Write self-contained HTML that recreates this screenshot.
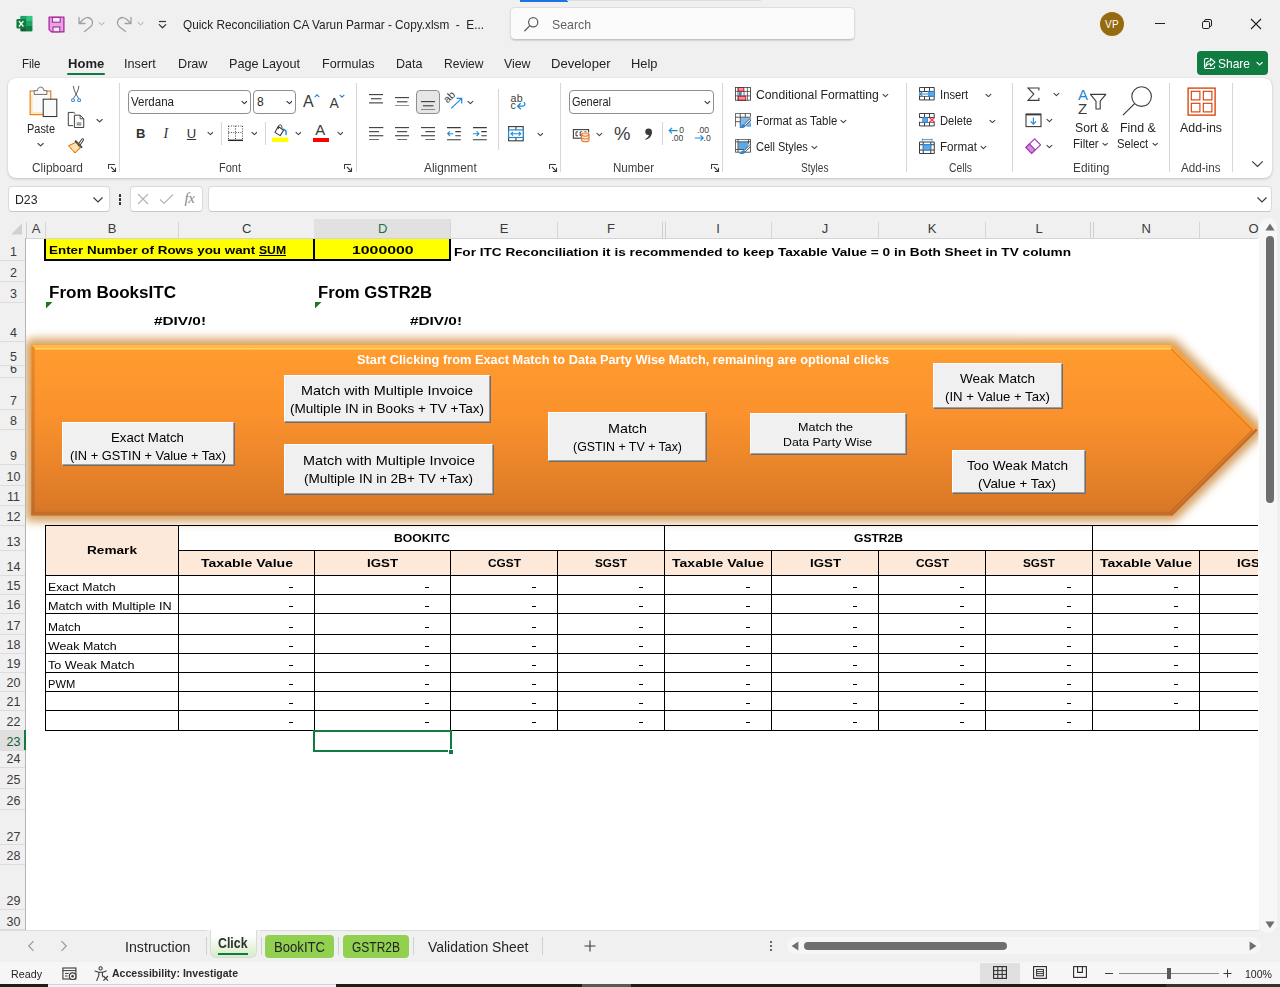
<!DOCTYPE html>
<html><head><meta charset="utf-8"><title>Excel</title>
<style>
html,body{margin:0;padding:0}
body{width:1280px;height:987px;position:relative;overflow:hidden;background:#f0f0f0;font-family:"Liberation Sans",sans-serif;color:#242424}
.b{position:absolute;display:block}
.t{position:absolute;white-space:nowrap;display:block}
</style></head><body>
<div class="b" style="left:520px;top:0px;width:47.5px;height:1.6px;background:#1a73e8"></div>
<div class="b" style="left:567px;top:0px;width:194px;height:1px;background:#dcdcdc"></div>
<svg class="b" style="left:15.6px;top:15.4px;" width="17.2" height="17.2" viewBox="0 0 19 19">
      <rect x="5" y="1" width="13" height="17" rx="1.5" fill="#21a366"/>
      <rect x="5" y="1" width="6.5" height="5.7" fill="#21a366"/>
      <rect x="11.5" y="1" width="6.5" height="5.7" rx="0" fill="#33c481"/>
      <rect x="5" y="6.7" width="6.5" height="5.6" fill="#107c41"/>
      <rect x="11.5" y="6.7" width="6.5" height="5.6" fill="#21a366"/>
      <rect x="5" y="12.3" width="6.5" height="5.7" fill="#185c37"/>
      <rect x="11.5" y="12.3" width="6.5" height="5.7" fill="#107c41"/>
      <rect x="0.5" y="4.5" width="10.5" height="10.5" rx="1.2" fill="#107c41"/>
      <path d="M3.3 6.8 L5.7 9.75 L3.3 12.7 M8.2 6.8 L5.7 9.75 L8.2 12.7" stroke="#fff" stroke-width="1.5" fill="none"/>
    </svg>
<svg class="b" style="left:47.6px;top:15.5px;" width="17" height="17" viewBox="0 0 17 17">
      <path d="M1.1 1.1 H15.9 V15.9 H3.4 L1.1 13.6 Z" fill="#e6a3e2" stroke="#a9279f" stroke-width="1.3" stroke-linejoin="round"/>
      <rect x="4.4" y="1.4" width="7.8" height="4.8" fill="#f4eef4" stroke="#a9279f" stroke-width="1.1"/>
      <rect x="5" y="11" width="6.8" height="4.8" fill="#f4eef4" stroke="#a9279f" stroke-width="1.1"/>
    </svg>
<svg class="b" style="left:77px;top:15px;" width="17" height="18" viewBox="0 0 17 18"><path d="M2 2.5 V8.5 H8 M2.3 8.2 L6.2 4.6 A5.2 5.2 0 1 1 13 12.2 L7.5 16.5" fill="none" stroke="#a0a0a0" stroke-width="1.3" stroke-linecap="round" stroke-linejoin="round"/></svg>
<svg class="b" style="left:97.9px;top:20.9px;" width="7.2" height="5.2" viewBox="0 0 7.2 5.2"><path d="M1 1.5 L3.6 3.9 L6.2 1.5" fill="none" stroke="#a0a0a0" stroke-width="1" stroke-linecap="round" stroke-linejoin="round"/></svg>
<svg class="b" style="left:116px;top:15px;" width="17" height="18" viewBox="0 0 17 18"><path d="M15 2.5 V8.5 H9 M14.7 8.2 L10.8 4.6 A5.2 5.2 0 1 0 4 12.2 L9.5 16.5" fill="none" stroke="#a0a0a0" stroke-width="1.3" stroke-linecap="round" stroke-linejoin="round"/></svg>
<svg class="b" style="left:136.9px;top:20.9px;" width="7.2" height="5.2" viewBox="0 0 7.2 5.2"><path d="M1 1.5 L3.6 3.9 L6.2 1.5" fill="none" stroke="#a0a0a0" stroke-width="1" stroke-linecap="round" stroke-linejoin="round"/></svg>
<svg class="b" style="left:158px;top:19.8px;" width="9" height="10" viewBox="0 0 9 10"><path d="M1 1.5 H8" stroke="#333" stroke-width="1.2"/><path d="M1.2 4.6 L4.5 7.8 L7.8 4.6" fill="none" stroke="#333" stroke-width="1.2" stroke-linejoin="round" stroke-linecap="round"/></svg>
<span class="t" style="transform-origin:0 50%;top:15.50px;line-height:18px;font-size:13px;left:183.00px;transform:scaleX(0.9070);white-space:pre">Quick Reconciliation CA Varun Parmar - Copy.xlsm  -  E...</span>
<div class="b" style="left:510px;top:7px;width:345px;height:33px;background:#fbfbfb;box-sizing:border-box;border:1px solid #dedede;border-bottom-color:#c4c4c4;border-radius:5px;box-shadow:0 1px 1.5px rgba(0,0,0,.12)"></div>
<svg class="b" style="left:523px;top:16px;" width="17" height="17" viewBox="0 0 17 17"><circle cx="10.2" cy="6.3" r="4.6" fill="none" stroke="#5c5c5c" stroke-width="1.2"/><path d="M6.9 9.6 L1.8 14.7" stroke="#5c5c5c" stroke-width="1.3" stroke-linecap="round"/></svg>
<span class="t" style="transform-origin:0 50%;top:15.50px;line-height:18px;font-size:13px;color:#616161;left:552.00px;transform:scaleX(0.9468)">Search</span>
<div class="b" style="left:1100px;top:12px;width:24px;height:24px;background:#966b10;border-radius:50%"></div>
<span class="t" style="top:17.50px;line-height:14px;font-size:10px;color:#fff;left:1112.00px;transform:translateX(-50%);letter-spacing:.3px">VP</span>
<div class="b" style="left:1155px;top:23px;width:10px;height:1px;background:#1f1f1f"></div>
<svg class="b" style="left:1201px;top:18px;" width="12" height="12" viewBox="0 0 12 12"><rect x="1.5" y="3.5" width="7" height="7" rx="1.3" fill="none" stroke="#1f1f1f" stroke-width="1"/><path d="M3.5 3.3 V3 a1.5 1.5 0 0 1 1.5 -1.5 H9 a1.5 1.5 0 0 1 1.5 1.5 V7 a1.5 1.5 0 0 1 -1.5 1.5 H8.7" fill="none" stroke="#1f1f1f" stroke-width="1"/></svg>
<svg class="b" style="left:1250px;top:18px;" width="12" height="12" viewBox="0 0 12 12"><path d="M1 1 L11 11 M11 1 L1 11" stroke="#1f1f1f" stroke-width="1.1"/></svg>
<span class="t" style="transform-origin:0 50%;top:54.50px;line-height:18px;font-size:13px;left:22.00px;transform:scaleX(0.8831)">File</span>
<span class="t" style="transform-origin:0 50%;top:54.50px;line-height:18px;font-size:13px;left:124.00px;transform:scaleX(0.9765)">Insert</span>
<span class="t" style="transform-origin:0 50%;top:54.50px;line-height:18px;font-size:13px;left:177.50px;transform:scaleX(0.9724)">Draw</span>
<span class="t" style="transform-origin:0 50%;top:54.50px;line-height:18px;font-size:13px;left:229.00px;transform:scaleX(0.9725)">Page Layout</span>
<span class="t" style="transform-origin:0 50%;top:54.50px;line-height:18px;font-size:13px;left:322.00px;transform:scaleX(0.9690)">Formulas</span>
<span class="t" style="transform-origin:0 50%;top:54.50px;line-height:18px;font-size:13px;left:396.00px;transform:scaleX(0.9650)">Data</span>
<span class="t" style="transform-origin:0 50%;top:54.50px;line-height:18px;font-size:13px;left:444.00px;transform:scaleX(0.9267)">Review</span>
<span class="t" style="transform-origin:0 50%;top:54.50px;line-height:18px;font-size:13px;left:504.00px;transform:scaleX(0.9483)">View</span>
<span class="t" style="transform-origin:0 50%;top:54.50px;line-height:18px;font-size:13px;left:551.00px;transform:scaleX(1.0041)">Developer</span>
<span class="t" style="transform-origin:0 50%;top:54.50px;line-height:18px;font-size:13px;left:631.00px;transform:scaleX(0.9911)">Help</span>
<span class="t" style="transform-origin:0 50%;top:54.50px;line-height:18px;font-size:13px;font-weight:bold;color:#1f1f1f;left:67.50px;transform:scaleX(1.0036)">Home</span>
<div class="b" style="left:67px;top:73px;width:37.5px;height:2.2px;background:#107c41;border-radius:1px"></div>
<div class="b" style="left:1197px;top:51px;width:71px;height:24px;background:#107c41;border-radius:4px"></div>
<svg class="b" style="left:1203px;top:56px;" width="14" height="14" viewBox="0 0 14 14"><path d="M7.5 2.5 L12 6.2 L7.5 10 V7.8 C5 7.8 3.6 8.8 2.8 10.5 C3 7 4.8 4.9 7.5 4.7 Z" fill="none" stroke="#fff" stroke-width="1.1" stroke-linejoin="round"/><path d="M5 2.5 H3 a1.5 1.5 0 0 0 -1.5 1.5 V11 a1.5 1.5 0 0 0 1.5 1.5 H10 a1.5 1.5 0 0 0 1.5 -1.5 V10.5" fill="none" stroke="#fff" stroke-width="1.1" stroke-linecap="round"/></svg>
<span class="t" style="transform-origin:0 50%;top:54.50px;line-height:18px;font-size:13px;color:#fff;left:1218.00px;transform:scaleX(0.9224)">Share</span>
<svg class="b" style="left:1256.4px;top:60.9px;" width="7.2" height="5.2" viewBox="0 0 7.2 5.2"><path d="M1 1.5 L3.6 3.9 L6.2 1.5" fill="none" stroke="#fff" stroke-width="1.1" stroke-linecap="round" stroke-linejoin="round"/></svg>
<div class="b" style="left:8px;top:78px;width:1264px;height:100.2px;background:#fff;border-radius:8px;box-shadow:0 1px 3px rgba(0,0,0,.18),0 0 1px rgba(0,0,0,.12)"></div>
<div class="b" style="left:119px;top:83px;width:1px;height:89px;background:#d6d6d6"></div>
<div class="b" style="left:356px;top:83px;width:1px;height:89px;background:#d6d6d6"></div>
<div class="b" style="left:559.5px;top:83px;width:1px;height:89px;background:#d6d6d6"></div>
<div class="b" style="left:721.5px;top:83px;width:1px;height:89px;background:#d6d6d6"></div>
<div class="b" style="left:905.9px;top:83px;width:1px;height:89px;background:#d6d6d6"></div>
<div class="b" style="left:1012px;top:83px;width:1px;height:89px;background:#d6d6d6"></div>
<div class="b" style="left:1169px;top:83px;width:1px;height:89px;background:#d6d6d6"></div>
<div class="b" style="left:1231.8px;top:83px;width:1px;height:89px;background:#d6d6d6"></div>
<svg class="b" style="left:20px;top:82px;" width="110" height="78" viewBox="0 0 1280 908"><rect x="118" y="105" width="240" height="275" fill="#fafafa" stroke="#e8760a" stroke-width="13"/><path d="M138 150 V360 H300" fill="none" stroke="#fde29a" stroke-width="14"/><path d="M165 145 V100 H203 C203 76 216 60 240 60 C264 60 277 76 277 100 H313 V145 Z" fill="#f7f7f7" stroke="#6a6a6a" stroke-width="11" stroke-linejoin="round"/><rect x="270" y="200" width="158" height="202" fill="#fafafa" stroke="#333" stroke-width="12"/><path d="M621 50 C630 110 655 150 684 192 M685 50 C676 110 651 150 622 192" fill="none" stroke="#444" stroke-width="10" stroke-linecap="round"/><circle cx="617" cy="211" r="17" fill="none" stroke="#2b88d8" stroke-width="12"/><circle cx="688" cy="211" r="17" fill="none" stroke="#2b88d8" stroke-width="12"/><path d="M618 508 H562 V354 H625 L642 368" fill="none" stroke="#333" stroke-width="11" stroke-linejoin="round"/><path d="M633 386 H700 L742 428 V530 H633 Z" fill="#fafafa" stroke="#333" stroke-width="11" stroke-linejoin="round"/><path d="M700 388 V428 H740" fill="none" stroke="#333" stroke-width="10"/><path d="M660 478 H714 M660 499 H714" stroke="#333" stroke-width="9"/><path d="M566 742 L652 702 L702 768 L640 824 Z" fill="#fde3ae" stroke="#e8760a" stroke-width="12" stroke-linejoin="round"/><path d="M610 790 L660 760" stroke="#fff" stroke-width="9"/><path d="M728 672 L690 728" stroke="#333" stroke-width="34" stroke-linecap="round"/><path d="M728 672 L690 728" stroke="#fafafa" stroke-width="13" stroke-linecap="round"/><path d="M648 690 L716 758" stroke="#333" stroke-width="22" stroke-linecap="round"/><path d="M652 694 L712 754" stroke="#e8e8e8" stroke-width="5"/></svg>
<span class="t" style="transform-origin:0 50%;top:120.50px;line-height:17px;font-size:12px;left:27.00px;transform:scaleX(0.9125)">Paste</span>
<svg class="b" style="left:36.8px;top:141.9px;" width="7.2" height="5.2" viewBox="0 0 7.2 5.2"><path d="M1 1.5 L3.6 3.9 L6.2 1.5" fill="none" stroke="#424242" stroke-width="1.1" stroke-linecap="round" stroke-linejoin="round"/></svg>
<svg class="b" style="left:95.9px;top:118px;" width="7.2" height="5.2" viewBox="0 0 7.2 5.2"><path d="M1 1.5 L3.6 3.9 L6.2 1.5" fill="none" stroke="#424242" stroke-width="1.1" stroke-linecap="round" stroke-linejoin="round"/></svg>
<span class="t" style="transform-origin:0 50%;top:160.00px;line-height:17px;font-size:12px;color:#3d3d3d;left:32.00px;transform:scaleX(0.9929)">Clipboard</span>
<svg class="b" style="left:107.6px;top:164px;" width="9" height="9" viewBox="0 0 9 9"><path d="M0.5 5 V0.5 H7" stroke="#3b3b3b" stroke-width="1.1" fill="none"/><path d="M3 3 L7.3 7.3 M7.5 3.8 V7.5 H3.8" stroke="#3b3b3b" stroke-width="1.1" fill="none"/></svg>
<div class="b" style="left:128px;top:90.3px;width:122.6px;height:23.6px;background:#fff;border:1px solid #8f8f8f;border-radius:4px;box-sizing:border-box"></div>
<div class="b" style="left:253px;top:90.3px;width:42.6px;height:23.6px;background:#fff;border:1px solid #8f8f8f;border-radius:4px;box-sizing:border-box"></div>
<span class="t" style="transform-origin:0 50%;top:93.50px;line-height:17px;font-size:12px;left:131.00px;transform:scaleX(0.9618)">Verdana</span>
<svg class="b" style="left:240.6px;top:100.1px;" width="6.8" height="4.8" viewBox="0 0 6.8 4.8"><path d="M1 1.4 L3.4 3.6 L5.8 1.4" fill="none" stroke="#333" stroke-width="1.1" stroke-linecap="round" stroke-linejoin="round"/></svg>
<span class="t" style="top:93.50px;line-height:17px;font-size:12px;left:257.00px">8</span>
<svg class="b" style="left:285.6px;top:100.1px;" width="6.8" height="4.8" viewBox="0 0 6.8 4.8"><path d="M1 1.4 L3.4 3.6 L5.8 1.4" fill="none" stroke="#333" stroke-width="1.1" stroke-linecap="round" stroke-linejoin="round"/></svg>
<span class="t" style="top:90.50px;line-height:22px;font-size:16px;color:#3b3b3b;left:303.00px">A</span>
<svg class="b" style="left:313.5px;top:94px;" width="6" height="4" viewBox="0 0 6 4"><path d="M0.7 3.2 L3 0.9 L5.3 3.2" fill="none" stroke="#1e8ad6" stroke-width="1.1"/></svg>
<span class="t" style="top:92.50px;line-height:20px;font-size:14px;color:#3b3b3b;left:329.60px">A</span>
<svg class="b" style="left:339px;top:94px;" width="6" height="4" viewBox="0 0 6 4"><path d="M0.7 0.8 L3 3.1 L5.3 0.8" fill="none" stroke="#1e8ad6" stroke-width="1.1"/></svg>
<span class="t" style="top:125.00px;line-height:18px;font-size:13px;font-weight:bold;color:#333;left:136.00px">B</span>
<span class="t" style="top:125.00px;line-height:18px;font-size:13px;font-style:italic;color:#333;left:163.50px;font-family:'Liberation Serif',serif;font-size:14px">I</span>
<span class="t" style="top:124.50px;line-height:18px;font-size:13px;color:#333;text-decoration:underline;left:186.80px">U</span>
<svg class="b" style="left:206.6px;top:131.1px;" width="6.8" height="4.8" viewBox="0 0 6.8 4.8"><path d="M1 1.4 L3.4 3.6 L5.8 1.4" fill="none" stroke="#424242" stroke-width="1.1" stroke-linecap="round" stroke-linejoin="round"/></svg>
<div class="b" style="left:221.2px;top:122px;width:1px;height:23px;background:#d6d6d6"></div>
<svg class="b" style="left:227px;top:125px;" width="17" height="17" viewBox="0 0 17 17">
      <path d="M1.5 1 H15.5 M1.5 1 V14 M15.5 1 V14 M8.5 1 V14 M1.5 7.5 H15.5" stroke="#4a4a4a" stroke-width="1" stroke-dasharray="1 1.4" fill="none"/>
      <path d="M1 15.3 H16" stroke="#2b2b2b" stroke-width="1.5"/></svg>
<svg class="b" style="left:250.6px;top:131.1px;" width="6.8" height="4.8" viewBox="0 0 6.8 4.8"><path d="M1 1.4 L3.4 3.6 L5.8 1.4" fill="none" stroke="#424242" stroke-width="1.1" stroke-linecap="round" stroke-linejoin="round"/></svg>
<div class="b" style="left:265px;top:122px;width:1px;height:23px;background:#d6d6d6"></div>
<svg class="b" style="left:272px;top:123px;" width="18" height="20" viewBox="0 0 18 20">
      <path d="M6.2 3.4 L11.6 7.2 L8.2 12.6 L3 9.4 Z" fill="#fff" stroke="#3b3b3b" stroke-width="1.1" stroke-linejoin="round"/>
      <path d="M6.4 6 C6 3.4 6.8 1.6 8.4 1.8 C9.8 2 10.2 3.8 9.8 5.8" fill="none" stroke="#3b3b3b" stroke-width="1"/>
      <path d="M11.4 6.2 C13.6 6.6 14.6 8.6 14 11.4" fill="none" stroke="#1e8ad6" stroke-width="1.5" stroke-linecap="round"/>
      <rect x="0" y="14.6" width="16.3" height="4.4" fill="#ffff00"/></svg>
<svg class="b" style="left:294.6px;top:131.1px;" width="6.8" height="4.8" viewBox="0 0 6.8 4.8"><path d="M1 1.4 L3.4 3.6 L5.8 1.4" fill="none" stroke="#424242" stroke-width="1.1" stroke-linecap="round" stroke-linejoin="round"/></svg>
<span class="t" style="top:119.00px;line-height:21px;font-size:15px;color:#3b3b3b;left:315.30px">A</span>
<div class="b" style="left:313px;top:137.6px;width:16.3px;height:4.4px;background:#ff0000"></div>
<svg class="b" style="left:336.6px;top:131.1px;" width="6.8" height="4.8" viewBox="0 0 6.8 4.8"><path d="M1 1.4 L3.4 3.6 L5.8 1.4" fill="none" stroke="#424242" stroke-width="1.1" stroke-linecap="round" stroke-linejoin="round"/></svg>
<span class="t" style="transform-origin:0 50%;top:160.00px;line-height:17px;font-size:12px;color:#3d3d3d;left:219.00px;transform:scaleX(0.9162)">Font</span>
<svg class="b" style="left:344px;top:164px;" width="9" height="9" viewBox="0 0 9 9"><path d="M0.5 5 V0.5 H7" stroke="#3b3b3b" stroke-width="1.1" fill="none"/><path d="M3 3 L7.3 7.3 M7.5 3.8 V7.5 H3.8" stroke="#3b3b3b" stroke-width="1.1" fill="none"/></svg>
<svg class="b" style="left:368.7px;top:93.9px;" width="14.3" height="9.7" viewBox="0 0 14.3 9.7"><path d="M0 0.6 H14.3" stroke="#3b3b3b" stroke-width="1.1"/><path d="M1.85 4.75 H12.45" stroke="#3b3b3b" stroke-width="1.1"/><path d="M0 8.9 H14.3" stroke="#3b3b3b" stroke-width="1.1"/></svg>
<svg class="b" style="left:394.7px;top:96.5px;" width="14.3" height="9.8" viewBox="0 0 14.3 9.8"><path d="M0 0.6 H14.3" stroke="#3b3b3b" stroke-width="1.1"/><path d="M1.85 4.8 H12.45" stroke="#3b3b3b" stroke-width="1.1"/><path d="M0 9 H14.3" stroke="#3b3b3b" stroke-width="1.1"/></svg>
<div class="b" style="left:416.2px;top:90.2px;width:23.6px;height:23.7px;background:#e6e6e6;border:1px solid #8f8f8f;border-radius:4px;box-sizing:border-box"></div>
<svg class="b" style="left:421px;top:100.6px;" width="14.3" height="9.8" viewBox="0 0 14.3 9.8"><path d="M0 0.6 H14.3" stroke="#3b3b3b" stroke-width="1.1"/><path d="M1.85 4.8 H12.45" stroke="#3b3b3b" stroke-width="1.1"/><path d="M0 9 H14.3" stroke="#3b3b3b" stroke-width="1.1"/></svg>
<svg class="b" style="left:444px;top:91px;" width="20" height="20" viewBox="0 0 20 20">
      <text x="0" y="0" font-size="10.5" font-family="Liberation Sans" fill="#3b3b3b" transform="translate(3.6 12.6) rotate(-45)">ab</text>
      <path d="M7.2 17.4 L17.4 7.6 M12.6 7.3 H17.7 V12.4" fill="none" stroke="#1e8ad6" stroke-width="1.2"/></svg>
<svg class="b" style="left:466.8px;top:99.9px;" width="6.8" height="4.8" viewBox="0 0 6.8 4.8"><path d="M1 1.4 L3.4 3.6 L5.8 1.4" fill="none" stroke="#424242" stroke-width="1.1" stroke-linecap="round" stroke-linejoin="round"/></svg>
<div class="b" style="left:497.7px;top:89px;width:1px;height:61px;background:#d6d6d6"></div>
<svg class="b" style="left:509px;top:93px;" width="19" height="18" viewBox="0 0 19 18">
      <text x="1.6" y="8.6" font-size="10.6" font-family="Liberation Sans" fill="#3b3b3b" letter-spacing=".3">ab</text>
      <text x="1.6" y="15.6" font-size="10.6" font-family="Liberation Sans" fill="#3b3b3b">c</text>
      <path d="M15.2 9.6 C16.8 11.2 15.6 13.2 13.4 13.2 H8.8 M11.4 10.6 L8.6 13.2 L11.4 15.8" fill="none" stroke="#1e8ad6" stroke-width="1.3" stroke-linecap="round"/></svg>
<svg class="b" style="left:368.7px;top:126.7px;" width="15" height="13.61" viewBox="0 0 15 13.61"><path d="M0 0.6 H14.3" stroke="#3b3b3b" stroke-width="1.1"/><path d="M0 4.67 H10" stroke="#3b3b3b" stroke-width="1.1"/><path d="M0 8.74 H14.3" stroke="#3b3b3b" stroke-width="1.1"/><path d="M0 12.81 H10" stroke="#3b3b3b" stroke-width="1.1"/></svg>
<svg class="b" style="left:394.7px;top:126.7px;" width="14.3" height="13.61" viewBox="0 0 14.3 13.61"><path d="M0 0.6 H14.3" stroke="#3b3b3b" stroke-width="1.1"/><path d="M2.15 4.67 H12.15" stroke="#3b3b3b" stroke-width="1.1"/><path d="M0 8.74 H14.3" stroke="#3b3b3b" stroke-width="1.1"/><path d="M2.15 12.81 H12.15" stroke="#3b3b3b" stroke-width="1.1"/></svg>
<svg class="b" style="left:420.8px;top:126.7px;" width="14.3" height="13.61" viewBox="0 0 14.3 13.61"><path d="M0 0.6 H14.3" stroke="#3b3b3b" stroke-width="1.1"/><path d="M4.3 4.67 H14.3" stroke="#3b3b3b" stroke-width="1.1"/><path d="M0 8.74 H14.3" stroke="#3b3b3b" stroke-width="1.1"/><path d="M4.3 12.81 H14.3" stroke="#3b3b3b" stroke-width="1.1"/></svg>
<svg class="b" style="left:447px;top:126.7px;" width="15" height="14" viewBox="0 0 15 14"><path d="M0 0.6 H13.8 M8.3 4.67 H13.8 M8.3 8.74 H13.8 M0 12.8 H13.8" stroke="#3b3b3b" stroke-width="1.1"/><path d="M6.3 6.7 H0.8 M3 4.4 L0.7 6.7 L3 9" fill="none" stroke="#1e8ad6" stroke-width="1.1"/></svg>
<svg class="b" style="left:473px;top:126.7px;" width="15" height="14" viewBox="0 0 15 14"><path d="M0 0.6 H13.8 M8.3 4.67 H13.8 M8.3 8.74 H13.8 M0 12.8 H13.8" stroke="#3b3b3b" stroke-width="1.1"/><path d="M0 6.7 H5.8 M3.6 4.4 L5.9 6.7 L3.6 9" fill="none" stroke="#1e8ad6" stroke-width="1.1"/></svg>
<svg class="b" style="left:508.4px;top:125.6px;" width="17" height="16" viewBox="0 0 17 16">
      <rect x="0.6" y="0.6" width="14.6" height="14.2" fill="#fff" stroke="#3b3b3b" stroke-width="1.1"/>
      <path d="M7.9 0.6 V4 M7.9 11.4 V14.8" stroke="#3b3b3b" stroke-width="1.1"/>
      <rect x="0.6" y="3.9" width="14.6" height="7.6" fill="#fff" stroke="#1e8ad6" stroke-width="1.2"/>
      <path d="M3 7.7 H12.8 M5 5.8 L3 7.7 L5 9.6 M10.8 5.8 L12.8 7.7 L10.8 9.6" fill="none" stroke="#1e8ad6" stroke-width="1.1"/></svg>
<svg class="b" style="left:536.6px;top:131.8px;" width="6.8" height="4.8" viewBox="0 0 6.8 4.8"><path d="M1 1.4 L3.4 3.6 L5.8 1.4" fill="none" stroke="#424242" stroke-width="1.1" stroke-linecap="round" stroke-linejoin="round"/></svg>
<span class="t" style="transform-origin:0 50%;top:160.00px;line-height:17px;font-size:12px;color:#3d3d3d;left:424.00px;transform:scaleX(0.9876)">Alignment</span>
<svg class="b" style="left:548.6px;top:164px;" width="9" height="9" viewBox="0 0 9 9"><path d="M0.5 5 V0.5 H7" stroke="#3b3b3b" stroke-width="1.1" fill="none"/><path d="M3 3 L7.3 7.3 M7.5 3.8 V7.5 H3.8" stroke="#3b3b3b" stroke-width="1.1" fill="none"/></svg>
<div class="b" style="left:569px;top:90.4px;width:145.4px;height:23.4px;background:#fff;border:1px solid #8f8f8f;border-radius:4px;box-sizing:border-box"></div>
<span class="t" style="transform-origin:0 50%;top:93.50px;line-height:17px;font-size:12px;left:572.00px;transform:scaleX(0.9135)">General</span>
<svg class="b" style="left:704.1px;top:100.1px;" width="6.8" height="4.8" viewBox="0 0 6.8 4.8"><path d="M1 1.4 L3.4 3.6 L5.8 1.4" fill="none" stroke="#333" stroke-width="1.1" stroke-linecap="round" stroke-linejoin="round"/></svg>
<svg class="b" style="left:572px;top:128px;" width="19" height="15" viewBox="0 0 19 15">
      <rect x="1.4" y="1.6" width="15.2" height="8.6" fill="#fff" stroke="#3b3b3b" stroke-width="1.1"/>
      <path d="M6 3.9 H4 V7.8 H6 M10.4 3.9 H8.2 V7.8 H10.4 M12.4 3.9 H14.4" stroke="#3b3b3b" stroke-width="1" fill="none"/>
      <rect x="9" y="4.4" width="9" height="10" fill="#fff"/>
      <path d="M9.6 6.6 V12.2 a3.7 1.6 0 0 0 7.4 0 V6.6" fill="#fde9d4" stroke="#e8742a" stroke-width="1.1"/>
      <ellipse cx="13.3" cy="6.6" rx="3.7" ry="1.6" fill="#fde9d4" stroke="#e8742a" stroke-width="1.1"/>
      <path d="M9.6 9.4 a3.7 1.6 0 0 0 7.4 0" fill="none" stroke="#e8742a" stroke-width="1"/></svg>
<svg class="b" style="left:596px;top:131.8px;" width="6.8" height="4.8" viewBox="0 0 6.8 4.8"><path d="M1 1.4 L3.4 3.6 L5.8 1.4" fill="none" stroke="#424242" stroke-width="1.1" stroke-linecap="round" stroke-linejoin="round"/></svg>
<span class="t" style="top:121.20px;line-height:26px;font-size:18.5px;color:#3b3b3b;left:614.00px">%</span>
<svg class="b" style="left:644px;top:128px;" width="9" height="13" viewBox="0 0 9 13"><circle cx="4.6" cy="3.8" r="3.3" fill="#3b3b3b"/><path d="M7.9 3.6 C8.2 7.6 6 10.6 1.6 11.8 L1.2 11 C3.8 9.8 5.2 8 5.2 5.6 Z" fill="#3b3b3b"/></svg>
<div class="b" style="left:662px;top:122px;width:1px;height:23px;background:#d6d6d6"></div>
<svg class="b" style="left:668px;top:125px;" width="18" height="17" viewBox="0 0 18 17">
      <path d="M1.3 5.6 H9.6 M4 2.9 L1.3 5.6 L4 8.3" fill="none" stroke="#1e8ad6" stroke-width="1.2"/>
      <text x="11.3" y="7.6" font-size="8.6" font-family="Liberation Sans" fill="#3b3b3b">0</text>
      <text x="3.4" y="15.9" font-size="8.6" font-family="Liberation Sans" fill="#3b3b3b">.00</text></svg>
<svg class="b" style="left:694px;top:125px;" width="18" height="17" viewBox="0 0 18 17">
      <text x="3.2" y="7.6" font-size="8.6" font-family="Liberation Sans" fill="#3b3b3b">.00</text>
      <path d="M0.8 13 H9.2 M6.5 10.3 L9.2 13 L6.5 15.7" fill="none" stroke="#1e8ad6" stroke-width="1.2"/>
      <text x="9.6" y="15.9" font-size="8.6" font-family="Liberation Sans" fill="#3b3b3b">.0</text></svg>
<span class="t" style="transform-origin:0 50%;top:160.00px;line-height:17px;font-size:12px;color:#3d3d3d;left:613.00px;transform:scaleX(0.9606)">Number</span>
<svg class="b" style="left:710.6px;top:164px;" width="9" height="9" viewBox="0 0 9 9"><path d="M0.5 5 V0.5 H7" stroke="#3b3b3b" stroke-width="1.1" fill="none"/><path d="M3 3 L7.3 7.3 M7.5 3.8 V7.5 H3.8" stroke="#3b3b3b" stroke-width="1.1" fill="none"/></svg>
<svg class="b" style="left:735.1px;top:87.2px;" width="16" height="13.7" viewBox="0 0 170 146"><rect x="0" y="0" width="169" height="145" fill="#fff"/><rect x="34" y="4" width="60" height="41" fill="#f4919a" stroke="#e3202d" stroke-width="8"/><rect x="34" y="98" width="80" height="43" fill="#f4919a" stroke="#e3202d" stroke-width="8"/><rect x="43" y="50" width="28" height="42" fill="#2b88d8"/><path d="M32 0 V145 M132 0 V145 M0 47 H169 M0 95 H169 M96 47 V95" stroke="#3b3b3b" stroke-width="8" fill="none"/><rect x="34" y="4" width="60" height="41" fill="none" stroke="#e3202d" stroke-width="7"/><rect x="34" y="98" width="80" height="43" fill="none" stroke="#e3202d" stroke-width="7"/><rect x="4" y="4" width="161" height="137" fill="none" stroke="#3b3b3b" stroke-width="9"/></svg>
<span class="t" style="transform-origin:0 50%;top:86.50px;line-height:17px;font-size:12px;left:755.70px;transform:scaleX(1.0180)">Conditional Formatting</span>
<svg class="b" style="left:882.2px;top:92.9px;" width="6.8" height="4.8" viewBox="0 0 6.8 4.8"><path d="M1 1.4 L3.4 3.6 L5.8 1.4" fill="none" stroke="#424242" stroke-width="1.1" stroke-linecap="round" stroke-linejoin="round"/></svg>
<svg class="b" style="left:735.1px;top:113.2px;" width="16.4" height="14.8" viewBox="0 0 175 158"><rect x="4" y="4" width="161" height="137" fill="#fff"/><rect x="58" y="50" width="110" height="92" fill="#7dbdf0"/><path d="M4 145 V4 H165 V40 M4 45 H165 M56 4 V145 M110 4 V45 M4 93 H56" stroke="#3b3b3b" stroke-width="9" fill="none"/><path d="M128 141 H168 V108" stroke="#2b88d8" stroke-width="8" fill="none"/><path d="M160 60 L97 123 L110 136 L172 73 Z" fill="#fff" stroke="#3b3b3b" stroke-width="9" stroke-linejoin="round"/><path d="M95 120 L112 138 C104 158 82 168 42 158 C62 150 62 126 95 120 Z" fill="#2b88d8"/></svg>
<span class="t" style="transform-origin:0 50%;top:112.50px;line-height:17px;font-size:12px;left:755.70px;transform:scaleX(0.9473)">Format as Table</span>
<svg class="b" style="left:840.2px;top:118.9px;" width="6.8" height="4.8" viewBox="0 0 6.8 4.8"><path d="M1 1.4 L3.4 3.6 L5.8 1.4" fill="none" stroke="#424242" stroke-width="1.1" stroke-linecap="round" stroke-linejoin="round"/></svg>
<svg class="b" style="left:735.1px;top:139.2px;" width="16.4" height="14.8" viewBox="0 0 175 158"><rect x="4" y="4" width="161" height="137" fill="#fff"/><rect x="34" y="32" width="108" height="80" fill="#5aa9ea"/><path d="M4 4 H165 V141 H4 Z M32 4 V141 M4 30 H165 M4 112 H100 M144 4 V50" stroke="#3b3b3b" stroke-width="9" fill="none"/><path d="M160 60 L97 123 L110 136 L172 73 Z" fill="#fff" stroke="#3b3b3b" stroke-width="9" stroke-linejoin="round"/><path d="M95 120 L112 138 C104 158 82 168 42 158 C62 150 62 126 95 120 Z" fill="#2b88d8"/></svg>
<span class="t" style="transform-origin:0 50%;top:138.50px;line-height:17px;font-size:12px;left:755.70px;transform:scaleX(0.9138)">Cell Styles</span>
<svg class="b" style="left:811.1px;top:144.9px;" width="6.8" height="4.8" viewBox="0 0 6.8 4.8"><path d="M1 1.4 L3.4 3.6 L5.8 1.4" fill="none" stroke="#424242" stroke-width="1.1" stroke-linecap="round" stroke-linejoin="round"/></svg>
<span class="t" style="transform-origin:0 50%;top:160.00px;line-height:17px;font-size:12px;color:#3d3d3d;left:800.50px;transform:scaleX(0.8415)">Styles</span>
<svg class="b" style="left:919px;top:87.25px;" width="16" height="13.7" viewBox="0 0 128 110"><rect x="4" y="4" width="118" height="100" fill="#fff"/><path d="M4 4 H122 V104 H4 Z M4 36 H122 M4 74 H122 M44 4 V36 M84 4 V36 M44 74 V104 M84 74 V104" stroke="#3b3b3b" stroke-width="8" fill="none"/><rect x="4" y="40" width="70" height="30" fill="#fff"/><rect x="78" y="38" width="46" height="36" fill="#5aa9ea" stroke="#2b88d8" stroke-width="7"/><path d="M6 56 H76 M28 36 L6 56 L28 76" stroke="#2b88d8" stroke-width="9" fill="none"/></svg>
<span class="t" style="transform-origin:0 50%;top:86.50px;line-height:17px;font-size:12px;left:939.60px;transform:scaleX(0.9380)">Insert</span>
<svg class="b" style="left:985.1px;top:92.6px;" width="6.8" height="4.8" viewBox="0 0 6.8 4.8"><path d="M1 1.4 L3.4 3.6 L5.8 1.4" fill="none" stroke="#424242" stroke-width="1.1" stroke-linecap="round" stroke-linejoin="round"/></svg>
<svg class="b" style="left:919px;top:113.25px;" width="16" height="13.7" viewBox="0 0 128 110"><rect x="4" y="4" width="118" height="100" fill="#fff"/><path d="M4 4 H122 V104 H4 Z M4 36 H122 M4 74 H122 M44 4 V36 M84 4 V36 M44 74 V104 M84 74 V104" stroke="#3b3b3b" stroke-width="8" fill="none"/><rect x="0" y="40" width="128" height="30" fill="#fff"/><rect x="30" y="38" width="38" height="36" fill="#5aa9ea" stroke="#2b88d8" stroke-width="7"/><path d="M84 36 L124 76 M124 36 L84 76" stroke="#f0323e" stroke-width="9" fill="none"/></svg>
<span class="t" style="transform-origin:0 50%;top:112.50px;line-height:17px;font-size:12px;left:939.60px;transform:scaleX(0.9311)">Delete</span>
<svg class="b" style="left:989.1px;top:118.6px;" width="6.8" height="4.8" viewBox="0 0 6.8 4.8"><path d="M1 1.4 L3.4 3.6 L5.8 1.4" fill="none" stroke="#424242" stroke-width="1.1" stroke-linecap="round" stroke-linejoin="round"/></svg>
<svg class="b" style="left:919px;top:138px;" width="16" height="16" viewBox="0 0 128 128"><path d="M26 4 V22 M104 4 V22 M26 13 H104" stroke="#2b88d8" stroke-width="7" fill="none"/><rect x="4" y="32" width="118" height="92" fill="#fff"/><path d="M4 32 H122 V124 H4 Z M4 54 H122 M4 96 H122 M34 32 V124 M94 32 V124" stroke="#3b3b3b" stroke-width="8" fill="none"/><rect x="34" y="54" width="60" height="42" fill="#5aa9ea" stroke="#2b88d8" stroke-width="7"/></svg>
<span class="t" style="transform-origin:0 50%;top:138.50px;line-height:17px;font-size:12px;left:939.60px;transform:scaleX(0.9709)">Format</span>
<svg class="b" style="left:980.1px;top:144.9px;" width="6.8" height="4.8" viewBox="0 0 6.8 4.8"><path d="M1 1.4 L3.4 3.6 L5.8 1.4" fill="none" stroke="#424242" stroke-width="1.1" stroke-linecap="round" stroke-linejoin="round"/></svg>
<span class="t" style="transform-origin:0 50%;top:160.00px;line-height:17px;font-size:12px;color:#3d3d3d;left:948.60px;transform:scaleX(0.8623)">Cells</span>
<svg class="b" style="left:1026.5px;top:87px;" width="14" height="14.5" viewBox="0 0 14 14.5"><path d="M11.9 3.6 V1 H1 L6.8 7.1 L1 13.4 H11.9 V10.8" fill="none" stroke="#3b3b3b" stroke-width="1.1" stroke-linejoin="miter"/></svg>
<svg class="b" style="left:1052.85px;top:92.4px;" width="6.8" height="4.8" viewBox="0 0 6.8 4.8"><path d="M1 1.4 L3.4 3.6 L5.8 1.4" fill="none" stroke="#424242" stroke-width="1.1" stroke-linecap="round" stroke-linejoin="round"/></svg>
<svg class="b" style="left:1024.6px;top:112.8px;" width="17" height="15" viewBox="0 0 17 15"><rect x="1" y="1.2" width="15" height="12.4" fill="#fff" stroke="#3b3b3b" stroke-width="1.1"/><path d="M1 1.5 H16" stroke="#3b3b3b" stroke-width="1.8"/><path d="M8.4 4.6 V11 M5.6 8.4 L8.4 11.2 L11.2 8.4" fill="none" stroke="#2b88d8" stroke-width="1.2"/></svg>
<svg class="b" style="left:1046px;top:118.3px;" width="6.8" height="4.8" viewBox="0 0 6.8 4.8"><path d="M1 1.4 L3.4 3.6 L5.8 1.4" fill="none" stroke="#424242" stroke-width="1.1" stroke-linecap="round" stroke-linejoin="round"/></svg>
<svg class="b" style="left:1024.6px;top:138px;" width="17" height="17" viewBox="0 0 17 17"><path d="M9.6 0.9 L15.6 6.9 L6.6 15.4 L0.9 9.4 Z" fill="#fff" stroke="#a236b2" stroke-width="1.2" stroke-linejoin="round"/><path d="M4.4 6 L10.2 11.9 L6.6 15.4 L0.9 9.4 Z" fill="#d58ade" stroke="#a236b2" stroke-width="1.1" stroke-linejoin="round"/></svg>
<svg class="b" style="left:1046px;top:144.2px;" width="6.8" height="4.8" viewBox="0 0 6.8 4.8"><path d="M1 1.4 L3.4 3.6 L5.8 1.4" fill="none" stroke="#424242" stroke-width="1.1" stroke-linecap="round" stroke-linejoin="round"/></svg>
<span class="t" style="top:83.50px;line-height:21px;font-size:15px;color:#1e8ad6;left:1078.00px">A</span>
<span class="t" style="top:97.80px;line-height:21px;font-size:15px;color:#3b3b3b;left:1078.00px">Z</span>
<svg class="b" style="left:1089px;top:93px;" width="19" height="18" viewBox="0 0 19 18"><path d="M1.4 1.4 H16.8 L11.2 8.2 V16 H7 V8.2 Z" fill="none" stroke="#3b3b3b" stroke-width="1.1" stroke-linejoin="round"/></svg>
<span class="t" style="transform-origin:0 50%;top:119.50px;line-height:17px;font-size:12px;left:1074.80px;transform:scaleX(1.0166)">Sort &amp;</span>
<span class="t" style="transform-origin:0 50%;top:135.50px;line-height:17px;font-size:12px;left:1073.00px;transform:scaleX(0.9637)">Filter</span>
<svg class="b" style="left:1102.3px;top:141.6px;" width="6.4" height="4.4" viewBox="0 0 6.4 4.4"><path d="M1 1.3 L3.2 3.3 L5.4 1.3" fill="none" stroke="#424242" stroke-width="1.1" stroke-linecap="round" stroke-linejoin="round"/></svg>
<svg class="b" style="left:1122px;top:86px;" width="31" height="31" viewBox="0 0 31 31"><circle cx="19.6" cy="10.6" r="9.8" fill="none" stroke="#3b3b3b" stroke-width="1.1"/><path d="M12.6 17.6 L1 29.2" stroke="#3b3b3b" stroke-width="1.2"/></svg>
<span class="t" style="transform-origin:0 50%;top:119.50px;line-height:17px;font-size:12px;left:1120.00px;transform:scaleX(1.0322)">Find &amp;</span>
<span class="t" style="transform-origin:0 50%;top:135.50px;line-height:17px;font-size:12px;left:1117.00px;transform:scaleX(0.9355)">Select</span>
<svg class="b" style="left:1151.8px;top:141.6px;" width="6.4" height="4.4" viewBox="0 0 6.4 4.4"><path d="M1 1.3 L3.2 3.3 L5.4 1.3" fill="none" stroke="#424242" stroke-width="1.1" stroke-linecap="round" stroke-linejoin="round"/></svg>
<span class="t" style="transform-origin:0 50%;top:160.00px;line-height:17px;font-size:12px;color:#3d3d3d;left:1073.00px;transform:scaleX(0.9920)">Editing</span>
<svg class="b" style="left:1186.5px;top:86.5px;" width="30" height="29" viewBox="0 0 30 29"><rect x="1.1" y="1.1" width="27" height="27" fill="#fff" stroke="#d83b01" stroke-width="1.3"/><rect x="4.3" y="4.3" width="8.6" height="8.6" fill="none" stroke="#d83b01" stroke-width="1.1"/><rect x="16.3" y="4.3" width="8.6" height="8.6" fill="none" stroke="#d83b01" stroke-width="1.1"/><rect x="4.3" y="16.3" width="8.6" height="8.6" fill="none" stroke="#d83b01" stroke-width="1.1"/><rect x="16.3" y="16.3" width="8.6" height="8.6" fill="none" stroke="#d83b01" stroke-width="1.1"/></svg>
<span class="t" style="transform-origin:0 50%;top:119.50px;line-height:17px;font-size:12px;left:1180.00px;transform:scaleX(1.0322)">Add-ins</span>
<span class="t" style="transform-origin:0 50%;top:160.00px;line-height:17px;font-size:12px;color:#3d3d3d;left:1181.00px;transform:scaleX(0.9708)">Add-ins</span>
<svg class="b" style="left:1251px;top:160px;" width="13" height="8" viewBox="0 0 13 8"><path d="M1.2 1.4 L6.5 6.4 L11.8 1.4" fill="none" stroke="#3b3b3b" stroke-width="1.2"/></svg>
<div class="b" style="left:8px;top:186.2px;width:101.6px;height:25.4px;background:#fff;border:1px solid #dadada;border-bottom-color:#c8c8c8;border-radius:4px;box-sizing:border-box"></div>
<span class="t" style="transform-origin:0 50%;top:190.50px;line-height:18px;font-size:13px;left:15.00px;transform:scaleX(0.9434)">D23</span>
<svg class="b" style="left:92px;top:196px;" width="12" height="8" viewBox="0 0 12 8"><path d="M1.5 1.5 L6 6 L10.5 1.5" fill="none" stroke="#3b3b3b" stroke-width="1.2"/></svg>
<div class="b" style="left:118.7px;top:194.4px;width:2.6px;height:2.6px;background:#2b2b2b;border-radius:.6px"></div>
<div class="b" style="left:118.7px;top:198.2px;width:2.6px;height:2.6px;background:#2b2b2b;border-radius:.6px"></div>
<div class="b" style="left:118.7px;top:202px;width:2.6px;height:2.6px;background:#2b2b2b;border-radius:.6px"></div>
<div class="b" style="left:130px;top:186.2px;width:73.4px;height:25.4px;background:#fff;border:1px solid #dadada;border-bottom-color:#c8c8c8;border-radius:4px;box-sizing:border-box"></div>
<svg class="b" style="left:137px;top:193px;" width="12" height="12" viewBox="0 0 12 12"><path d="M1 1 L11 11 M11 1 L1 11" stroke="#b3b3b3" stroke-width="1.1"/></svg>
<svg class="b" style="left:159px;top:193px;" width="15" height="12" viewBox="0 0 15 12"><path d="M1 6.5 L5 10.5 L14 1.5" fill="none" stroke="#b3b3b3" stroke-width="1.1"/></svg>
<span class="t" style="top:188.00px;line-height:21px;font-size:15px;font-style:italic;color:#8a8a8a;left:184.50px;font-family:'Liberation Serif',serif;letter-spacing:-.3px">fx</span>
<div class="b" style="left:207.8px;top:186.2px;width:1064.6px;height:25.4px;background:#fff;border:1px solid #dadada;border-bottom-color:#c8c8c8;border-radius:4px;box-sizing:border-box"></div>
<svg class="b" style="left:1256px;top:196px;" width="12" height="8" viewBox="0 0 12 8"><path d="M1.5 1.5 L6 6 L10.5 1.5" fill="none" stroke="#3b3b3b" stroke-width="1.2"/></svg>
<div class="b" style="left:26px;top:238px;width:1232.5px;height:692px;background:#fff"></div>
<div class="b" style="left:0px;top:219px;width:1260px;height:19px;background:#f0f0f0"></div>
<svg class="b" style="left:10px;top:223px;" width="13" height="12" viewBox="0 0 13 12"><path d="M12 0.5 V11.5 H1 Z" fill="#d0d0d0"/></svg>
<div class="b" style="left:44.5px;top:222px;width:1px;height:16px;background:#d6d6d6"></div>
<span class="t" style="top:220.20px;line-height:18px;font-size:13px;color:#3b3b3b;left:36.10px;transform:translateX(-50%)">A</span>
<div class="b" style="left:177.5px;top:222px;width:1px;height:16px;background:#d6d6d6"></div>
<span class="t" style="top:220.20px;line-height:18px;font-size:13px;color:#3b3b3b;left:112.10px;transform:translateX(-50%)">B</span>
<div class="b" style="left:313.5px;top:222px;width:1px;height:16px;background:#d6d6d6"></div>
<span class="t" style="top:220.20px;line-height:18px;font-size:13px;color:#3b3b3b;left:246.60px;transform:translateX(-50%)">C</span>
<div class="b" style="left:314.2px;top:219px;width:136.6px;height:19.6px;background:#e1e1e1;border-bottom:1.8px solid #1e7145;box-sizing:border-box"></div>
<div class="b" style="left:449.5px;top:222px;width:1px;height:16px;background:#d6d6d6"></div>
<span class="t" style="top:220.20px;line-height:18px;font-size:13px;color:#1e7145;left:382.60px;transform:translateX(-50%)">D</span>
<div class="b" style="left:556.5px;top:222px;width:1px;height:16px;background:#d6d6d6"></div>
<span class="t" style="top:220.20px;line-height:18px;font-size:13px;color:#3b3b3b;left:504.10px;transform:translateX(-50%)">E</span>
<div class="b" style="left:661.8px;top:222px;width:1px;height:16px;background:#cfcfcf"></div>
<div class="b" style="left:664.6px;top:222px;width:1px;height:16px;background:#cfcfcf"></div>
<span class="t" style="top:220.20px;line-height:18px;font-size:13px;color:#3b3b3b;left:611.10px;transform:translateX(-50%)">F</span>
<div class="b" style="left:770.5px;top:222px;width:1px;height:16px;background:#d6d6d6"></div>
<span class="t" style="top:220.20px;line-height:18px;font-size:13px;color:#3b3b3b;left:718.10px;transform:translateX(-50%)">I</span>
<div class="b" style="left:877.5px;top:222px;width:1px;height:16px;background:#d6d6d6"></div>
<span class="t" style="top:220.20px;line-height:18px;font-size:13px;color:#3b3b3b;left:825.10px;transform:translateX(-50%)">J</span>
<div class="b" style="left:984.5px;top:222px;width:1px;height:16px;background:#d6d6d6"></div>
<span class="t" style="top:220.20px;line-height:18px;font-size:13px;color:#3b3b3b;left:932.10px;transform:translateX(-50%)">K</span>
<div class="b" style="left:1089.8px;top:222px;width:1px;height:16px;background:#cfcfcf"></div>
<div class="b" style="left:1092.6px;top:222px;width:1px;height:16px;background:#cfcfcf"></div>
<span class="t" style="top:220.20px;line-height:18px;font-size:13px;color:#3b3b3b;left:1039.10px;transform:translateX(-50%)">L</span>
<div class="b" style="left:1198.5px;top:222px;width:1px;height:16px;background:#d6d6d6"></div>
<span class="t" style="top:220.20px;line-height:18px;font-size:13px;color:#3b3b3b;left:1146.10px;transform:translateX(-50%)">N</span>
<div class="b" style="left:1305.5px;top:222px;width:1px;height:16px;background:#d6d6d6"></div>
<span class="t" style="top:220.20px;line-height:18px;font-size:13px;color:#3b3b3b;left:1248.60px">O</span>
<div class="b" style="left:25.5px;top:222px;width:1px;height:16px;background:#cfcfcf"></div>
<div class="b" style="left:26px;top:237.5px;width:1232px;height:1px;background:#d4d4d4"></div>
<div class="b" style="left:0px;top:238px;width:26px;height:692px;background:#f0f0f0"></div>
<div class="b" style="left:25.2px;top:238px;width:0.8px;height:692px;background:#b4b4b4"></div>
<div class="b" style="left:0;top:238px;width:26px;height:22.5px;overflow:hidden"><span class="t" style="left:13.5px;transform:translateX(-50%);top:6.4px;line-height:16px;font-size:12.5px;color:#3b3b3b">1</span></div>
<div class="b" style="left:0px;top:260px;width:25px;height:1px;background:#dcdcdc"></div>
<div class="b" style="left:0;top:260.5px;width:26px;height:21px;overflow:hidden"><span class="t" style="left:13.5px;transform:translateX(-50%);top:4.9px;line-height:16px;font-size:12.5px;color:#3b3b3b">2</span></div>
<div class="b" style="left:0px;top:281px;width:25px;height:1px;background:#dcdcdc"></div>
<div class="b" style="left:0;top:281.5px;width:26px;height:20.5px;overflow:hidden"><span class="t" style="left:13.5px;transform:translateX(-50%);top:4.4px;line-height:16px;font-size:12.5px;color:#3b3b3b">3</span></div>
<div class="b" style="left:0px;top:301.5px;width:25px;height:1px;background:#dcdcdc"></div>
<div class="b" style="left:0;top:302px;width:26px;height:39.5px;overflow:hidden"><span class="t" style="left:13.5px;transform:translateX(-50%);top:23.4px;line-height:16px;font-size:12.5px;color:#3b3b3b">4</span></div>
<div class="b" style="left:0px;top:341px;width:25px;height:1px;background:#dcdcdc"></div>
<div class="b" style="left:0;top:341.5px;width:26px;height:24px;overflow:hidden"><span class="t" style="left:13.5px;transform:translateX(-50%);top:7.9px;line-height:16px;font-size:12.5px;color:#3b3b3b">5</span></div>
<div class="b" style="left:0px;top:365px;width:25px;height:1px;background:#dcdcdc"></div>
<div class="b" style="left:0;top:365.5px;width:26px;height:12px;overflow:hidden"><span class="t" style="left:13.5px;transform:translateX(-50%);top:-4.1px;line-height:16px;font-size:12.5px;color:#3b3b3b">6</span></div>
<div class="b" style="left:0px;top:377px;width:25px;height:1px;background:#dcdcdc"></div>
<div class="b" style="left:0;top:377.5px;width:26px;height:31.5px;overflow:hidden"><span class="t" style="left:13.5px;transform:translateX(-50%);top:15.4px;line-height:16px;font-size:12.5px;color:#3b3b3b">7</span></div>
<div class="b" style="left:0px;top:408.5px;width:25px;height:1px;background:#dcdcdc"></div>
<div class="b" style="left:0;top:409px;width:26px;height:20.2px;overflow:hidden"><span class="t" style="left:13.5px;transform:translateX(-50%);top:4.1px;line-height:16px;font-size:12.5px;color:#3b3b3b">8</span></div>
<div class="b" style="left:0px;top:428.7px;width:25px;height:1px;background:#dcdcdc"></div>
<div class="b" style="left:0;top:429.2px;width:26px;height:35.3px;overflow:hidden"><span class="t" style="left:13.5px;transform:translateX(-50%);top:19.2px;line-height:16px;font-size:12.5px;color:#3b3b3b">9</span></div>
<div class="b" style="left:0px;top:464px;width:25px;height:1px;background:#dcdcdc"></div>
<div class="b" style="left:0;top:464.5px;width:26px;height:20.5px;overflow:hidden"><span class="t" style="left:13.5px;transform:translateX(-50%);top:4.4px;line-height:16px;font-size:12.5px;color:#3b3b3b">10</span></div>
<div class="b" style="left:0px;top:484.5px;width:25px;height:1px;background:#dcdcdc"></div>
<div class="b" style="left:0;top:485px;width:26px;height:20px;overflow:hidden"><span class="t" style="left:13.5px;transform:translateX(-50%);top:3.9px;line-height:16px;font-size:12.5px;color:#3b3b3b">11</span></div>
<div class="b" style="left:0px;top:504.5px;width:25px;height:1px;background:#dcdcdc"></div>
<div class="b" style="left:0;top:505px;width:26px;height:20.5px;overflow:hidden"><span class="t" style="left:13.5px;transform:translateX(-50%);top:4.4px;line-height:16px;font-size:12.5px;color:#3b3b3b">12</span></div>
<div class="b" style="left:0px;top:525px;width:25px;height:1px;background:#dcdcdc"></div>
<div class="b" style="left:0;top:525.5px;width:26px;height:25px;overflow:hidden"><span class="t" style="left:13.5px;transform:translateX(-50%);top:8.9px;line-height:16px;font-size:12.5px;color:#3b3b3b">13</span></div>
<div class="b" style="left:0px;top:550px;width:25px;height:1px;background:#dcdcdc"></div>
<div class="b" style="left:0;top:550.5px;width:26px;height:25px;overflow:hidden"><span class="t" style="left:13.5px;transform:translateX(-50%);top:8.9px;line-height:16px;font-size:12.5px;color:#3b3b3b">14</span></div>
<div class="b" style="left:0px;top:575px;width:25px;height:1px;background:#dcdcdc"></div>
<div class="b" style="left:0;top:575.5px;width:26px;height:19px;overflow:hidden"><span class="t" style="left:13.5px;transform:translateX(-50%);top:2.9px;line-height:16px;font-size:12.5px;color:#3b3b3b">15</span></div>
<div class="b" style="left:0px;top:594px;width:25px;height:1px;background:#dcdcdc"></div>
<div class="b" style="left:0;top:594.5px;width:26px;height:19px;overflow:hidden"><span class="t" style="left:13.5px;transform:translateX(-50%);top:2.9px;line-height:16px;font-size:12.5px;color:#3b3b3b">16</span></div>
<div class="b" style="left:0px;top:613px;width:25px;height:1px;background:#dcdcdc"></div>
<div class="b" style="left:0;top:613.5px;width:26px;height:21px;overflow:hidden"><span class="t" style="left:13.5px;transform:translateX(-50%);top:4.9px;line-height:16px;font-size:12.5px;color:#3b3b3b">17</span></div>
<div class="b" style="left:0px;top:634px;width:25px;height:1px;background:#dcdcdc"></div>
<div class="b" style="left:0;top:634.5px;width:26px;height:19px;overflow:hidden"><span class="t" style="left:13.5px;transform:translateX(-50%);top:2.9px;line-height:16px;font-size:12.5px;color:#3b3b3b">18</span></div>
<div class="b" style="left:0px;top:653px;width:25px;height:1px;background:#dcdcdc"></div>
<div class="b" style="left:0;top:653.5px;width:26px;height:19px;overflow:hidden"><span class="t" style="left:13.5px;transform:translateX(-50%);top:2.9px;line-height:16px;font-size:12.5px;color:#3b3b3b">19</span></div>
<div class="b" style="left:0px;top:672px;width:25px;height:1px;background:#dcdcdc"></div>
<div class="b" style="left:0;top:672.5px;width:26px;height:19px;overflow:hidden"><span class="t" style="left:13.5px;transform:translateX(-50%);top:2.9px;line-height:16px;font-size:12.5px;color:#3b3b3b">20</span></div>
<div class="b" style="left:0px;top:691px;width:25px;height:1px;background:#dcdcdc"></div>
<div class="b" style="left:0;top:691.5px;width:26px;height:19px;overflow:hidden"><span class="t" style="left:13.5px;transform:translateX(-50%);top:2.9px;line-height:16px;font-size:12.5px;color:#3b3b3b">21</span></div>
<div class="b" style="left:0px;top:710px;width:25px;height:1px;background:#dcdcdc"></div>
<div class="b" style="left:0;top:710.5px;width:26px;height:19.8px;overflow:hidden"><span class="t" style="left:13.5px;transform:translateX(-50%);top:3.7px;line-height:16px;font-size:12.5px;color:#3b3b3b">22</span></div>
<div class="b" style="left:0px;top:729.8px;width:25px;height:1px;background:#dcdcdc"></div>
<div class="b" style="left:0;top:730.3px;width:26px;height:20.2px;overflow:hidden;background:#dfdfdf;border-right:2px solid #107c41;box-sizing:border-box"><span class="t" style="left:13.5px;transform:translateX(-50%);top:4.1px;line-height:16px;font-size:12.5px;color:#185c37">23</span></div>
<div class="b" style="left:0px;top:750px;width:25px;height:1px;background:#dcdcdc"></div>
<div class="b" style="left:0;top:750.5px;width:26px;height:17px;overflow:hidden"><span class="t" style="left:13.5px;transform:translateX(-50%);top:0.9px;line-height:16px;font-size:12.5px;color:#3b3b3b">24</span></div>
<div class="b" style="left:0px;top:767px;width:25px;height:1px;background:#dcdcdc"></div>
<div class="b" style="left:0;top:767.5px;width:26px;height:20.9px;overflow:hidden"><span class="t" style="left:13.5px;transform:translateX(-50%);top:4.8px;line-height:16px;font-size:12.5px;color:#3b3b3b">25</span></div>
<div class="b" style="left:0px;top:787.9px;width:25px;height:1px;background:#dcdcdc"></div>
<div class="b" style="left:0;top:788.4px;width:26px;height:21.1px;overflow:hidden"><span class="t" style="left:13.5px;transform:translateX(-50%);top:5px;line-height:16px;font-size:12.5px;color:#3b3b3b">26</span></div>
<div class="b" style="left:0px;top:809px;width:25px;height:1px;background:#dcdcdc"></div>
<div class="b" style="left:0;top:809.5px;width:26px;height:35.1px;overflow:hidden"><span class="t" style="left:13.5px;transform:translateX(-50%);top:19px;line-height:16px;font-size:12.5px;color:#3b3b3b">27</span></div>
<div class="b" style="left:0px;top:844.1px;width:25px;height:1px;background:#dcdcdc"></div>
<div class="b" style="left:0;top:844.6px;width:26px;height:19.8px;overflow:hidden"><span class="t" style="left:13.5px;transform:translateX(-50%);top:3.7px;line-height:16px;font-size:12.5px;color:#3b3b3b">28</span></div>
<div class="b" style="left:0px;top:863.9px;width:25px;height:1px;background:#dcdcdc"></div>
<div class="b" style="left:0;top:864.4px;width:26px;height:44.9px;overflow:hidden"><span class="t" style="left:13.5px;transform:translateX(-50%);top:28.8px;line-height:16px;font-size:12.5px;color:#3b3b3b">29</span></div>
<div class="b" style="left:0px;top:908.8px;width:25px;height:1px;background:#dcdcdc"></div>
<div class="b" style="left:0;top:909.3px;width:26px;height:20.5px;overflow:hidden"><span class="t" style="left:13.5px;transform:translateX(-50%);top:4.4px;line-height:16px;font-size:12.5px;color:#3b3b3b">30</span></div>
<div class="b" style="left:0px;top:929.3px;width:25px;height:1px;background:#dcdcdc"></div>
<div class="b" style="left:44px;top:238.6px;width:270.5px;height:22.4px;background:#ffff00;border:2px solid #000;border-top:none;box-sizing:border-box"></div>
<div class="b" style="left:313.2px;top:238.6px;width:137.8px;height:22.4px;background:#ffff00;border:2px solid #000;border-top:none;box-sizing:border-box"></div>
<span class="t" style="transform-origin:0 50%;top:242.50px;line-height:15px;font-size:11px;font-weight:bold;color:#000;left:49.00px;transform:scaleX(1.2184);white-space:pre">Enter Number of Rows you want </span>
<span class="t" style="transform-origin:0 50%;top:242.50px;line-height:15px;font-size:11px;font-weight:bold;color:#000;text-decoration:underline;left:259.00px;transform:scaleX(1.1045)">SUM</span>
<span class="t" style="transform-origin:0 50%;top:241.80px;line-height:16px;font-size:11.4px;font-weight:bold;color:#000;left:352.00px;transform:scaleX(1.3879)">1000000</span>
<span class="t" style="transform-origin:0 50%;top:244.50px;line-height:15px;font-size:11px;font-weight:bold;color:#000;left:454.00px;transform:scaleX(1.2383)">For ITC Reconciliation it is recommended to keep Taxable Value = 0 in Both Sheet in TV column</span>
<span class="t" style="transform-origin:0 50%;top:281.50px;line-height:22px;font-size:16px;font-weight:bold;color:#000;left:49.00px;transform:scaleX(1.0662)">From BooksITC</span>
<span class="t" style="transform-origin:0 50%;top:281.50px;line-height:22px;font-size:16px;font-weight:bold;color:#000;left:318.00px;transform:scaleX(1.0426)">From GSTR2B</span>
<svg class="b" style="left:45.5px;top:302px;" width="7" height="7" viewBox="0 0 7 7"><path d="M0 0 H6.5 L0 6.5 Z" fill="#1a7a1a"/></svg>
<svg class="b" style="left:314.5px;top:302px;" width="7" height="7" viewBox="0 0 7 7"><path d="M0 0 H6.5 L0 6.5 Z" fill="#1a7a1a"/></svg>
<span class="t" style="transform-origin:0 50%;top:313.50px;line-height:15px;font-size:11px;font-weight:bold;color:#000;left:154.00px;transform:scaleX(1.3944)">#DIV/0!</span>
<span class="t" style="transform-origin:0 50%;top:313.50px;line-height:15px;font-size:11px;font-weight:bold;color:#000;left:410.00px;transform:scaleX(1.3944)">#DIV/0!</span>
<svg class="b" style="left:0;top:0" width="1280" height="560" viewBox="0 0 1280 560"><defs><linearGradient id="og" x1="0" y1="0" x2="0" y2="1"><stop offset="0" stop-color="#ff9c2f"/><stop offset=".4" stop-color="#fb922d"/><stop offset=".8" stop-color="#e48029"/><stop offset="1" stop-color="#d67627"/></linearGradient><linearGradient id="lg" x1="0" y1="0" x2="0" y2="1"><stop offset="0" stop-color="#ec8a2c"/><stop offset="1" stop-color="#bd6c2a"/></linearGradient><filter id="glow" x="-3%%" y="-15%%" width="106%%" height="130%%"><feGaussianBlur stdDeviation="4.8"/></filter><clipPath id="gc"><rect x="26" y="238" width="1232.5" height="320"/></clipPath><clipPath id="ac"><polygon points="31.3,344.8 1172.4,344.8 1257.6,430.2 1172.4,515.6 31.3,515.6"/></clipPath></defs><g clip-path="url(#gc)"><polygon points="31.3,344.8 1172.4,344.8 1257.6,430.2 1172.4,515.6 31.3,515.6" fill="#d49a56" stroke="#d49a56" stroke-width="12" stroke-linejoin="round" opacity=".95" filter="url(#glow)"/><polygon points="31.3,344.8 1172.4,344.8 1257.6,430.2 1172.4,515.6 31.3,515.6" fill="url(#og)"/><g clip-path="url(#ac)"><rect x="31.3" y="344.8" width="1143.1" height="3" fill="#ffbb45"/><path d="M34.3 348.7 H1171.4" stroke="#ffd968" stroke-width="1.4"/><path d="M1172.4 344.8 L1257.6 430.2" stroke="#f7a43e" stroke-width="4.4"/><path d="M1170.8 348.7 L1252.4 430.2" stroke="#c9741f" stroke-width=".9"/><rect x="31.3" y="511.8" width="1142.1" height="3.8" fill="#c26e2b"/><path d="M34.3 511 H1171.4" stroke="#cf772a" stroke-width="1"/><path d="M1172.4 515.6 L1257.6 430.2" stroke="#c26e2b" stroke-width="5"/><path d="M1170.8 511.4 L1252.2 430.2" stroke="#a85c1d" stroke-width=".9"/><polygon points="31.3,344.8 34.7,348.2 34.7,512 31.3,515.6" fill="url(#lg)"/></g></g></svg>
<span class="t" style="transform-origin:0 50%;top:349.50px;line-height:19px;font-size:13.5px;font-weight:bold;color:#fff;left:357.00px;transform:scaleX(0.9470)">Start Clicking from Exact Match to Data Party Wise Match, remaining are optional clicks</span>
<div class="b" style="left:62px;top:422px;width:171.7px;height:43.2px;background:#f0f0f0;box-sizing:border-box;border:1px solid;border-color:#fff #a0a0a0 #a0a0a0 #fff;box-shadow:1px 1px 0 #6e6e6e"></div>
<span class="t" style="transform-origin:0 50%;top:427.50px;line-height:19px;font-size:13.5px;color:#000;left:111.00px;transform:scaleX(0.9828)">Exact Match</span>
<span class="t" style="transform-origin:0 50%;top:445.50px;line-height:19px;font-size:13.5px;color:#000;left:69.50px;transform:scaleX(0.9501)">(IN + GSTIN + Value + Tax)</span>
<div class="b" style="left:283.5px;top:375px;width:206.2px;height:47.2px;background:#f0f0f0;box-sizing:border-box;border:1px solid;border-color:#fff #a0a0a0 #a0a0a0 #fff;box-shadow:1px 1px 0 #6e6e6e"></div>
<span class="t" style="transform-origin:0 50%;top:381.00px;line-height:19px;font-size:13.5px;color:#000;left:300.50px;transform:scaleX(1.0662)">Match with Multiple Invoice</span>
<span class="t" style="transform-origin:0 50%;top:399.00px;line-height:19px;font-size:13.5px;color:#000;left:289.50px;transform:scaleX(1.0035)">(Multiple IN in Books + TV +Tax)</span>
<div class="b" style="left:283.5px;top:444px;width:209.2px;height:49.7px;background:#f0f0f0;box-sizing:border-box;border:1px solid;border-color:#fff #a0a0a0 #a0a0a0 #fff;box-shadow:1px 1px 0 #6e6e6e"></div>
<span class="t" style="transform-origin:0 50%;top:451.00px;line-height:19px;font-size:13.5px;color:#000;left:302.50px;transform:scaleX(1.0662)">Match with Multiple Invoice</span>
<span class="t" style="transform-origin:0 50%;top:469.00px;line-height:19px;font-size:13.5px;color:#000;left:304.00px;transform:scaleX(1.0026)">(Multiple IN in 2B+ TV +Tax)</span>
<div class="b" style="left:548.3px;top:412px;width:158.1px;height:49.2px;background:#f0f0f0;box-sizing:border-box;border:1px solid;border-color:#fff #a0a0a0 #a0a0a0 #fff;box-shadow:1px 1px 0 #6e6e6e"></div>
<span class="t" style="transform-origin:0 50%;top:419.00px;line-height:19px;font-size:13.5px;color:#000;left:607.50px;transform:scaleX(1.0608)">Match</span>
<span class="t" style="transform-origin:0 50%;top:437.00px;line-height:19px;font-size:13.5px;color:#000;left:572.50px;transform:scaleX(0.9176)">(GSTIN + TV + Tax)</span>
<div class="b" style="left:749.8px;top:413.2px;width:156px;height:41.2px;background:#f0f0f0;box-sizing:border-box;border:1px solid;border-color:#fff #a0a0a0 #a0a0a0 #fff;box-shadow:1px 1px 0 #6e6e6e"></div>
<span class="t" style="transform-origin:0 50%;top:419.00px;line-height:16px;font-size:11.5px;color:#000;left:798.25px;transform:scaleX(1.0911)">Match the</span>
<span class="t" style="transform-origin:0 50%;top:434.00px;line-height:16px;font-size:11.5px;color:#000;left:783.00px;transform:scaleX(1.0737)">Data Party Wise</span>
<div class="b" style="left:933px;top:363px;width:128.7px;height:44.7px;background:#f0f0f0;box-sizing:border-box;border:1px solid;border-color:#fff #a0a0a0 #a0a0a0 #fff;box-shadow:1px 1px 0 #6e6e6e"></div>
<span class="t" style="transform-origin:0 50%;top:369.00px;line-height:19px;font-size:13.5px;color:#000;left:959.50px;transform:scaleX(1.0030)">Weak Match</span>
<span class="t" style="transform-origin:0 50%;top:387.00px;line-height:19px;font-size:13.5px;color:#000;left:944.50px;transform:scaleX(0.9763)">(IN + Value + Tax)</span>
<div class="b" style="left:952px;top:450px;width:132.7px;height:43.2px;background:#f0f0f0;box-sizing:border-box;border:1px solid;border-color:#fff #a0a0a0 #a0a0a0 #fff;box-shadow:1px 1px 0 #6e6e6e"></div>
<span class="t" style="transform-origin:0 50%;top:456.00px;line-height:19px;font-size:13.5px;color:#000;left:966.50px;transform:scaleX(1.0070)">Too Weak Match</span>
<span class="t" style="transform-origin:0 50%;top:474.00px;line-height:19px;font-size:13.5px;color:#000;left:978.00px;transform:scaleX(0.9915)">(Value + Tax)</span>
<div class="b" style="left:45px;top:525px;width:133px;height:50px;background:#fde9d9"></div>
<div class="b" style="left:178px;top:550px;width:1080px;height:25px;background:#fde9d9"></div>
<div class="b" style="left:45px;top:524.5px;width:1213px;height:1.5px;background:#000"></div>
<div class="b" style="left:178px;top:549.5px;width:1080px;height:1.5px;background:#000"></div>
<div class="b" style="left:45px;top:574.5px;width:1213px;height:1.5px;background:#000"></div>
<div class="b" style="left:45px;top:593.5px;width:1213px;height:1.5px;background:#000"></div>
<div class="b" style="left:45px;top:612.5px;width:1213px;height:1.5px;background:#000"></div>
<div class="b" style="left:45px;top:633.5px;width:1213px;height:1.5px;background:#000"></div>
<div class="b" style="left:45px;top:652.5px;width:1213px;height:1.5px;background:#000"></div>
<div class="b" style="left:45px;top:671.5px;width:1213px;height:1.5px;background:#000"></div>
<div class="b" style="left:45px;top:690.5px;width:1213px;height:1.5px;background:#000"></div>
<div class="b" style="left:45px;top:709.5px;width:1213px;height:1.5px;background:#000"></div>
<div class="b" style="left:45px;top:729.5px;width:1213px;height:1.5px;background:#000"></div>
<div class="b" style="left:44.5px;top:525px;width:1.5px;height:205.5px;background:#000"></div>
<div class="b" style="left:177.5px;top:525px;width:1.5px;height:205.5px;background:#000"></div>
<div class="b" style="left:313.5px;top:550px;width:1.5px;height:180.5px;background:#000"></div>
<div class="b" style="left:449.5px;top:550px;width:1.5px;height:180.5px;background:#000"></div>
<div class="b" style="left:556.5px;top:550px;width:1.5px;height:180.5px;background:#000"></div>
<div class="b" style="left:663.5px;top:525px;width:1.5px;height:205.5px;background:#000"></div>
<div class="b" style="left:770.5px;top:550px;width:1.5px;height:180.5px;background:#000"></div>
<div class="b" style="left:877.5px;top:550px;width:1.5px;height:180.5px;background:#000"></div>
<div class="b" style="left:984.5px;top:550px;width:1.5px;height:180.5px;background:#000"></div>
<div class="b" style="left:1091.5px;top:525px;width:1.5px;height:205.5px;background:#000"></div>
<div class="b" style="left:1198.5px;top:550px;width:1.5px;height:180.5px;background:#000"></div>
<span class="t" style="transform-origin:0 50%;top:542.80px;line-height:15px;font-size:11px;font-weight:bold;color:#000;left:87.00px;transform:scaleX(1.2389)">Remark</span>
<span class="t" style="transform-origin:0 50%;top:530.50px;line-height:15px;font-size:11px;font-weight:bold;color:#000;left:394.00px;transform:scaleX(1.1041)">BOOKITC</span>
<span class="t" style="transform-origin:0 50%;top:530.50px;line-height:15px;font-size:11px;font-weight:bold;color:#000;left:854.00px;transform:scaleX(1.0982)">GSTR2B</span>
<span class="t" style="transform-origin:0 50%;top:555.50px;line-height:15px;font-size:11px;font-weight:bold;color:#000;left:201.00px;transform:scaleX(1.2787)">Taxable Value</span>
<span class="t" style="transform-origin:0 50%;top:555.50px;line-height:15px;font-size:11px;font-weight:bold;color:#000;left:367.00px;transform:scaleX(1.2077)">IGST</span>
<span class="t" style="transform-origin:0 50%;top:555.50px;line-height:15px;font-size:11px;font-weight:bold;color:#000;left:488.00px;transform:scaleX(1.0800)">CGST</span>
<span class="t" style="transform-origin:0 50%;top:555.50px;line-height:15px;font-size:11px;font-weight:bold;color:#000;left:595.00px;transform:scaleX(1.0684)">SGST</span>
<span class="t" style="transform-origin:0 50%;top:555.50px;line-height:15px;font-size:11px;font-weight:bold;color:#000;left:672.00px;transform:scaleX(1.2787)">Taxable Value</span>
<span class="t" style="transform-origin:0 50%;top:555.50px;line-height:15px;font-size:11px;font-weight:bold;color:#000;left:810.00px;transform:scaleX(1.2077)">IGST</span>
<span class="t" style="transform-origin:0 50%;top:555.50px;line-height:15px;font-size:11px;font-weight:bold;color:#000;left:916.00px;transform:scaleX(1.0800)">CGST</span>
<span class="t" style="transform-origin:0 50%;top:555.50px;line-height:15px;font-size:11px;font-weight:bold;color:#000;left:1023.00px;transform:scaleX(1.0684)">SGST</span>
<span class="t" style="transform-origin:0 50%;top:555.50px;line-height:15px;font-size:11px;font-weight:bold;color:#000;left:1100.00px;transform:scaleX(1.2787)">Taxable Value</span>
<div class="b" style="left:1199px;top:551px;width:59px;height:24px;overflow:hidden"><span class="t" style="transform-origin:0 50%;top:4.50px;line-height:15px;font-size:11px;font-weight:bold;color:#000;left:38.00px;transform:scaleX(1.2077)">IGST</span></div>
<span class="t" style="transform-origin:0 50%;top:579.00px;line-height:16px;font-size:11.2px;color:#000;left:47.80px;transform:scaleX(1.0986)">Exact Match</span>
<div class="b" style="left:289.2px;top:586.7px;width:3.8px;height:1.3px;background:#000"></div>
<div class="b" style="left:425.2px;top:586.7px;width:3.8px;height:1.3px;background:#000"></div>
<div class="b" style="left:532.2px;top:586.7px;width:3.8px;height:1.3px;background:#000"></div>
<div class="b" style="left:639.2px;top:586.7px;width:3.8px;height:1.3px;background:#000"></div>
<div class="b" style="left:746.2px;top:586.7px;width:3.8px;height:1.3px;background:#000"></div>
<div class="b" style="left:853.2px;top:586.7px;width:3.8px;height:1.3px;background:#000"></div>
<div class="b" style="left:960.2px;top:586.7px;width:3.8px;height:1.3px;background:#000"></div>
<div class="b" style="left:1067.2px;top:586.7px;width:3.8px;height:1.3px;background:#000"></div>
<div class="b" style="left:1174.2px;top:586.7px;width:3.8px;height:1.3px;background:#000"></div>
<span class="t" style="transform-origin:0 50%;top:598.00px;line-height:16px;font-size:11.2px;color:#000;left:47.80px;transform:scaleX(1.1292)">Match with Multiple IN</span>
<div class="b" style="left:289.2px;top:605.7px;width:3.8px;height:1.3px;background:#000"></div>
<div class="b" style="left:425.2px;top:605.7px;width:3.8px;height:1.3px;background:#000"></div>
<div class="b" style="left:532.2px;top:605.7px;width:3.8px;height:1.3px;background:#000"></div>
<div class="b" style="left:639.2px;top:605.7px;width:3.8px;height:1.3px;background:#000"></div>
<div class="b" style="left:746.2px;top:605.7px;width:3.8px;height:1.3px;background:#000"></div>
<div class="b" style="left:853.2px;top:605.7px;width:3.8px;height:1.3px;background:#000"></div>
<div class="b" style="left:960.2px;top:605.7px;width:3.8px;height:1.3px;background:#000"></div>
<div class="b" style="left:1067.2px;top:605.7px;width:3.8px;height:1.3px;background:#000"></div>
<div class="b" style="left:1174.2px;top:605.7px;width:3.8px;height:1.3px;background:#000"></div>
<span class="t" style="transform-origin:0 50%;top:619.00px;line-height:16px;font-size:11.2px;color:#000;left:47.80px;transform:scaleX(1.0721)">Match</span>
<div class="b" style="left:289.2px;top:626.7px;width:3.8px;height:1.3px;background:#000"></div>
<div class="b" style="left:425.2px;top:626.7px;width:3.8px;height:1.3px;background:#000"></div>
<div class="b" style="left:532.2px;top:626.7px;width:3.8px;height:1.3px;background:#000"></div>
<div class="b" style="left:639.2px;top:626.7px;width:3.8px;height:1.3px;background:#000"></div>
<div class="b" style="left:746.2px;top:626.7px;width:3.8px;height:1.3px;background:#000"></div>
<div class="b" style="left:853.2px;top:626.7px;width:3.8px;height:1.3px;background:#000"></div>
<div class="b" style="left:960.2px;top:626.7px;width:3.8px;height:1.3px;background:#000"></div>
<div class="b" style="left:1067.2px;top:626.7px;width:3.8px;height:1.3px;background:#000"></div>
<div class="b" style="left:1174.2px;top:626.7px;width:3.8px;height:1.3px;background:#000"></div>
<span class="t" style="transform-origin:0 50%;top:638.00px;line-height:16px;font-size:11.2px;color:#000;left:47.80px;transform:scaleX(1.1074)">Weak Match</span>
<div class="b" style="left:289.2px;top:645.7px;width:3.8px;height:1.3px;background:#000"></div>
<div class="b" style="left:425.2px;top:645.7px;width:3.8px;height:1.3px;background:#000"></div>
<div class="b" style="left:532.2px;top:645.7px;width:3.8px;height:1.3px;background:#000"></div>
<div class="b" style="left:639.2px;top:645.7px;width:3.8px;height:1.3px;background:#000"></div>
<div class="b" style="left:746.2px;top:645.7px;width:3.8px;height:1.3px;background:#000"></div>
<div class="b" style="left:853.2px;top:645.7px;width:3.8px;height:1.3px;background:#000"></div>
<div class="b" style="left:960.2px;top:645.7px;width:3.8px;height:1.3px;background:#000"></div>
<div class="b" style="left:1067.2px;top:645.7px;width:3.8px;height:1.3px;background:#000"></div>
<div class="b" style="left:1174.2px;top:645.7px;width:3.8px;height:1.3px;background:#000"></div>
<span class="t" style="transform-origin:0 50%;top:657.00px;line-height:16px;font-size:11.2px;color:#000;left:47.80px;transform:scaleX(1.1263)">To Weak Match</span>
<div class="b" style="left:289.2px;top:664.7px;width:3.8px;height:1.3px;background:#000"></div>
<div class="b" style="left:425.2px;top:664.7px;width:3.8px;height:1.3px;background:#000"></div>
<div class="b" style="left:532.2px;top:664.7px;width:3.8px;height:1.3px;background:#000"></div>
<div class="b" style="left:639.2px;top:664.7px;width:3.8px;height:1.3px;background:#000"></div>
<div class="b" style="left:746.2px;top:664.7px;width:3.8px;height:1.3px;background:#000"></div>
<div class="b" style="left:853.2px;top:664.7px;width:3.8px;height:1.3px;background:#000"></div>
<div class="b" style="left:960.2px;top:664.7px;width:3.8px;height:1.3px;background:#000"></div>
<div class="b" style="left:1067.2px;top:664.7px;width:3.8px;height:1.3px;background:#000"></div>
<div class="b" style="left:1174.2px;top:664.7px;width:3.8px;height:1.3px;background:#000"></div>
<span class="t" style="transform-origin:0 50%;top:676.00px;line-height:16px;font-size:11.2px;color:#000;left:47.80px;transform:scaleX(0.9937)">PWM</span>
<div class="b" style="left:289.2px;top:683.7px;width:3.8px;height:1.3px;background:#000"></div>
<div class="b" style="left:425.2px;top:683.7px;width:3.8px;height:1.3px;background:#000"></div>
<div class="b" style="left:532.2px;top:683.7px;width:3.8px;height:1.3px;background:#000"></div>
<div class="b" style="left:639.2px;top:683.7px;width:3.8px;height:1.3px;background:#000"></div>
<div class="b" style="left:746.2px;top:683.7px;width:3.8px;height:1.3px;background:#000"></div>
<div class="b" style="left:853.2px;top:683.7px;width:3.8px;height:1.3px;background:#000"></div>
<div class="b" style="left:960.2px;top:683.7px;width:3.8px;height:1.3px;background:#000"></div>
<div class="b" style="left:1067.2px;top:683.7px;width:3.8px;height:1.3px;background:#000"></div>
<div class="b" style="left:1174.2px;top:683.7px;width:3.8px;height:1.3px;background:#000"></div>
<div class="b" style="left:289.2px;top:702.7px;width:3.8px;height:1.3px;background:#000"></div>
<div class="b" style="left:425.2px;top:702.7px;width:3.8px;height:1.3px;background:#000"></div>
<div class="b" style="left:532.2px;top:702.7px;width:3.8px;height:1.3px;background:#000"></div>
<div class="b" style="left:639.2px;top:702.7px;width:3.8px;height:1.3px;background:#000"></div>
<div class="b" style="left:746.2px;top:702.7px;width:3.8px;height:1.3px;background:#000"></div>
<div class="b" style="left:853.2px;top:702.7px;width:3.8px;height:1.3px;background:#000"></div>
<div class="b" style="left:960.2px;top:702.7px;width:3.8px;height:1.3px;background:#000"></div>
<div class="b" style="left:1067.2px;top:702.7px;width:3.8px;height:1.3px;background:#000"></div>
<div class="b" style="left:1174.2px;top:702.7px;width:3.8px;height:1.3px;background:#000"></div>
<div class="b" style="left:289.2px;top:722.2px;width:3.8px;height:1.3px;background:#000"></div>
<div class="b" style="left:425.2px;top:722.2px;width:3.8px;height:1.3px;background:#000"></div>
<div class="b" style="left:532.2px;top:722.2px;width:3.8px;height:1.3px;background:#000"></div>
<div class="b" style="left:639.2px;top:722.2px;width:3.8px;height:1.3px;background:#000"></div>
<div class="b" style="left:746.2px;top:722.2px;width:3.8px;height:1.3px;background:#000"></div>
<div class="b" style="left:853.2px;top:722.2px;width:3.8px;height:1.3px;background:#000"></div>
<div class="b" style="left:960.2px;top:722.2px;width:3.8px;height:1.3px;background:#000"></div>
<div class="b" style="left:1067.2px;top:722.2px;width:3.8px;height:1.3px;background:#000"></div>
<div class="b" style="left:312.5px;top:729.5px;width:139px;height:22px;border:2px solid #107c41;box-sizing:border-box"></div>
<div class="b" style="left:447.5px;top:748.5px;width:6px;height:6px;background:#107c41;border:1px solid #fff;box-sizing:border-box"></div>
<div class="b" style="left:0px;top:929.8px;width:209.6px;height:32.2px;background:#f0f0f0;border-top-right-radius:5px"></div>
<div class="b" style="left:256.8px;top:929.8px;width:1023.2px;height:32.2px;background:#f0f0f0;border-top-left-radius:5px"></div>
<div class="b" style="left:200px;top:957.6px;width:70px;height:4.4px;background:#f0f0f0"></div>
<div class="b" style="left:200px;top:940px;width:70px;height:18px;background:#f0f0f0"></div>
<div class="b" style="left:209.6px;top:929.8px;width:47.2px;height:28px;background:#fff;border-radius:0 0 6px 6px"></div>
<div class="b" style="left:0px;top:929.6px;width:207px;height:0.8px;background:#dcdcdc"></div>
<div class="b" style="left:260px;top:929.6px;width:998px;height:0.8px;background:#dcdcdc"></div>
<svg class="b" style="left:27px;top:940px;" width="8" height="12" viewBox="0 0 8 12"><path d="M6.5 1.2 L1.8 6 L6.5 10.8" fill="none" stroke="#9a9a9a" stroke-width="1.2"/></svg>
<svg class="b" style="left:60px;top:940px;" width="8" height="12" viewBox="0 0 8 12"><path d="M1.5 1.2 L6.2 6 L1.5 10.8" fill="none" stroke="#9a9a9a" stroke-width="1.2"/></svg>
<span class="t" style="transform-origin:0 50%;top:936.50px;line-height:20px;font-size:14.3px;left:125.00px;transform:scaleX(0.9929)">Instruction</span>
<div class="b" style="left:209.8px;top:929.8px;width:46.8px;height:28px;background:linear-gradient(#fff 18%,#d7edc5);border:1px solid #dadada;border-top:none;border-radius:0 0 6px 6px;box-sizing:border-box"></div>
<span class="t" style="transform-origin:0 50%;top:933.40px;line-height:20px;font-size:14.6px;font-weight:bold;color:#2f2f2f;left:218.00px;transform:scaleX(0.8454)">Click</span>
<div class="b" style="left:218px;top:953px;width:29.5px;height:2px;background:#107c41"></div>
<div class="b" style="left:206px;top:937px;width:1px;height:18px;background:#d0d0d0"></div>
<div class="b" style="left:260.5px;top:937px;width:1px;height:18px;background:#d0d0d0"></div>
<div class="b" style="left:338px;top:937px;width:1px;height:18px;background:#d0d0d0"></div>
<div class="b" style="left:413px;top:937px;width:1px;height:18px;background:#d0d0d0"></div>
<div class="b" style="left:542px;top:937px;width:1px;height:18px;background:#d0d0d0"></div>
<div class="b" style="left:265px;top:934.5px;width:69px;height:23px;background:#92d050;border-radius:4px"></div>
<span class="t" style="transform-origin:0 50%;top:936.50px;line-height:20px;font-size:14.3px;left:274.00px;transform:scaleX(0.9168)">BookITC</span>
<div class="b" style="left:343px;top:934.5px;width:66px;height:23px;background:#92d050;border-radius:4px"></div>
<span class="t" style="transform-origin:0 50%;top:936.50px;line-height:20px;font-size:14.3px;left:352.00px;transform:scaleX(0.8389)">GSTR2B</span>
<span class="t" style="transform-origin:0 50%;top:936.50px;line-height:20px;font-size:14.3px;left:428.00px;transform:scaleX(0.9749)">Validation Sheet</span>
<svg class="b" style="left:584px;top:940px;" width="12" height="12" viewBox="0 0 12 12"><path d="M6 0.5 V11.5 M0.5 6 H11.5" stroke="#3b3b3b" stroke-width="1.1"/></svg>
<div class="b" style="left:770px;top:941px;width:2px;height:2px;background:#3b3b3b;border-radius:1px"></div>
<div class="b" style="left:770px;top:945px;width:2px;height:2px;background:#3b3b3b;border-radius:1px"></div>
<div class="b" style="left:770px;top:949px;width:2px;height:2px;background:#3b3b3b;border-radius:1px"></div>
<div class="b" style="left:787px;top:937px;width:473.5px;height:17px;background:#f6f6f6;border-radius:8.5px"></div>
<svg class="b" style="left:791px;top:941px;" width="8" height="10" viewBox="0 0 8 10"><path d="M7.4 0.4 V9.6 L0.6 5 Z" fill="#6e6e6e"/></svg>
<svg class="b" style="left:1248.8px;top:940.5px;" width="8" height="10" viewBox="0 0 8 10"><path d="M0.6 0.4 V9.6 L7.4 5 Z" fill="#6e6e6e"/></svg>
<div class="b" style="left:804px;top:941.5px;width:203px;height:8px;background:#6e6e6e;border-radius:4px"></div>
<div class="b" style="left:0px;top:961.7px;width:1280px;height:22.4px;background:#f6f6f6"></div>
<span class="t" style="transform-origin:0 50%;top:966.20px;line-height:16px;font-size:11.5px;left:11.00px;transform:scaleX(0.9325)">Ready</span>
<svg class="b" style="left:61.5px;top:966.5px;" width="16" height="14" viewBox="0 0 16 14"><rect x="0.9" y="1" width="13" height="11" fill="none" stroke="#3b3b3b" stroke-width="1.1"/><path d="M0.9 3.6 H13.9 M3 6.4 H6.6 M3 9 H5.6" stroke="#3b3b3b" stroke-width="1"/><circle cx="10.6" cy="9.2" r="3.3" fill="#f6f6f6" stroke="#3b3b3b" stroke-width="1.1"/><circle cx="10.6" cy="9.2" r="1.3" fill="#3b3b3b"/></svg>
<svg class="b" style="left:93.5px;top:965.5px;" width="16" height="16" viewBox="0 0 16 16"><circle cx="6.6" cy="2.4" r="1.6" fill="none" stroke="#3b3b3b" stroke-width="1.1"/><path d="M1 5 L4.6 6.2 H8.6 L12.2 5 M4.8 6.4 V9.6 L2.8 14.4 M8.4 6.4 V9.6 L9 10.8" fill="none" stroke="#3b3b3b" stroke-width="1.1" stroke-linecap="round" stroke-linejoin="round"/><path d="M9.4 10 L14 14.6 M14 10 L9.4 14.6" stroke="#3b3b3b" stroke-width="1.2"/></svg>
<span class="t" style="transform-origin:0 50%;top:964.50px;line-height:16px;font-size:11.5px;font-weight:bold;color:#2b2b2b;left:112.00px;transform:scaleX(0.9169)">Accessibility: Investigate</span>
<div class="b" style="left:980px;top:962.5px;width:40px;height:21.5px;background:#e0e0e0"></div>
<svg class="b" style="left:992.5px;top:966px;" width="14" height="13" viewBox="0 0 14 13"><rect x="0.6" y="0.6" width="12.8" height="11.8" fill="none" stroke="#2b2b2b" stroke-width="1.1"/><path d="M0.6 4.6 H13.4 M0.6 8.4 H13.4 M4.8 0.6 V12.4 M9.2 0.6 V12.4" stroke="#2b2b2b" stroke-width="1"/></svg>
<svg class="b" style="left:1033px;top:966px;" width="14" height="13" viewBox="0 0 14 13"><rect x="0.6" y="0.6" width="12.8" height="11.8" fill="none" stroke="#2b2b2b" stroke-width="1.1"/><rect x="3.6" y="3.4" width="6.8" height="6.4" fill="none" stroke="#2b2b2b" stroke-width="1"/><path d="M3.6 5.6 H10.4 M3.6 7.6 H10.4" stroke="#2b2b2b" stroke-width=".9"/></svg>
<svg class="b" style="left:1073px;top:966px;" width="14" height="13" viewBox="0 0 14 13"><rect x="0.6" y="0.6" width="12.8" height="10.8" fill="none" stroke="#2b2b2b" stroke-width="1.1"/><path d="M4.6 0.6 V6.4 H9.4 V0.6" fill="none" stroke="#2b2b2b" stroke-width="1.1"/></svg>
<div class="b" style="left:1105px;top:972.8px;width:8px;height:1px;background:#3b3b3b"></div>
<div class="b" style="left:1119px;top:972.8px;width:100px;height:1px;background:#8a8a8a"></div>
<div class="b" style="left:1167px;top:967.5px;width:4px;height:11px;background:#5a5a5a"></div>
<svg class="b" style="left:1223.3px;top:968.5px;" width="9" height="9" viewBox="0 0 9 9"><path d="M4.5 0.5 V8.5 M0.5 4.5 H8.5" stroke="#3b3b3b" stroke-width="1"/></svg>
<span class="t" style="transform-origin:0 50%;top:965.60px;line-height:16px;font-size:11.5px;left:1245.00px;transform:scaleX(0.9180)">100%</span>
<div class="b" style="left:0px;top:984px;width:1280px;height:3px;background:#1f1f17"></div>
<div class="b" style="left:48px;top:984px;width:288px;height:3px;background:#f3f3f3;border-top:1px solid #d2d2d2;box-sizing:border-box"></div>
<div class="b" style="left:582px;top:984px;width:49px;height:3px;background:#5a5a55"></div>
<div class="b" style="left:1166px;top:984px;width:114px;height:3px;background:#33332b"></div>
<div class="b" style="left:1258.6px;top:215px;width:21.4px;height:717px;background:#efefef"></div>
<div class="b" style="left:1258.6px;top:217.5px;width:18.2px;height:715px;background:#f7f7f7;border-radius:9px"></div>
<svg class="b" style="left:1264.5px;top:223px;" width="10" height="8" viewBox="0 0 10 8"><path d="M5 0.6 L9.6 7.4 H0.4 Z" fill="#6e6e6e"/></svg>
<div class="b" style="left:1265.5px;top:236px;width:8px;height:267px;background:#6e6e6e;border-radius:4px"></div>
<svg class="b" style="left:1264.7px;top:920.8px;" width="10" height="8" viewBox="0 0 10 8"><path d="M5 7.2 L9.6 0.5 H0.4 Z" fill="#6e6e6e"/></svg>
</body></html>
